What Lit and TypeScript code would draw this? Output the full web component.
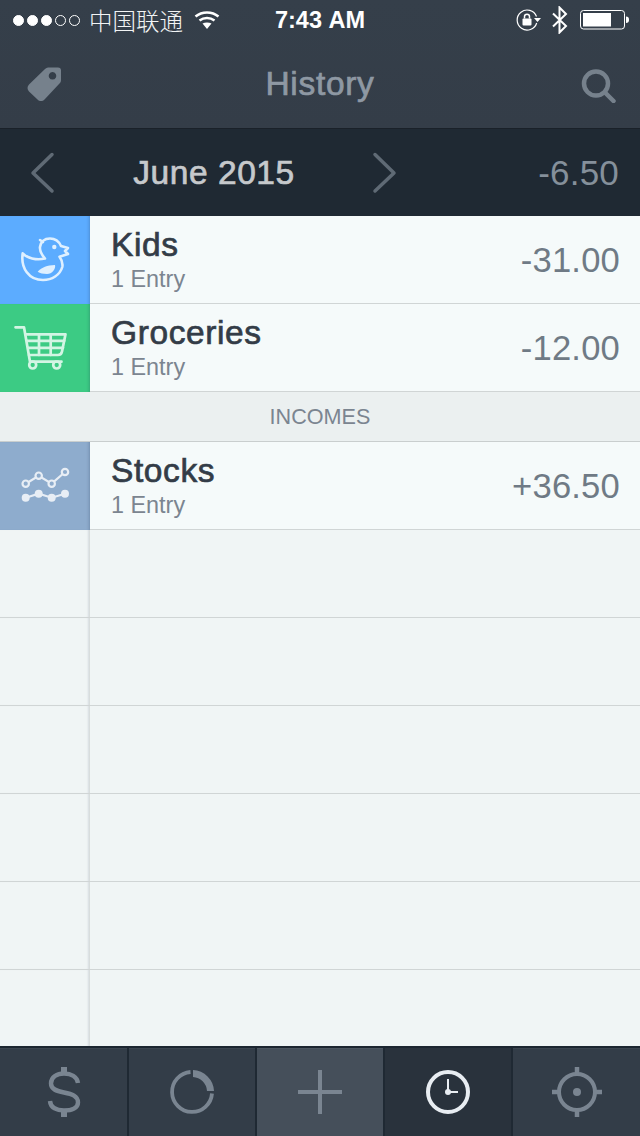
import { LitElement, html, css, svg } from "lit";
import { customElement } from "lit/decorators.js";

const duck = svg`<svg class="tile-icon" viewBox="0 0 90 88" fill="none" stroke="#dff0ff" stroke-width="2.600" stroke-linejoin="round" stroke-linecap="round">
  <path d="M22.7 37.3C27 42 36 44.5 45 42.5C41 38 39.5 35 40 31C41 25.500 45 22.500 50 22.500C55 22.500 59 25.500 61 30L68 32L65 35L68 38L59.500 40.700C62 44 63 47 62.300 51C60 59 52 64 43 64C29 64 20.500 52 22.700 37.300Z"/>
  <path d="M40 24L43 26" />
  <path d="M37.700 55.700C42 51 47 49.500 55 49C56 53 52 58 47 58C43 58 40 57 37.700 55.700Z" fill="#dff0ff" stroke="none"/>
  <circle cx="54.300" cy="31" r="2.200" fill="#dff0ff" stroke="none"/>
</svg>`;

const cart = svg`<svg class="tile-icon" viewBox="0 0 90 88" fill="none" stroke="#d3f5e4" stroke-width="2.700" stroke-linejoin="round" stroke-linecap="round">
  <path d="M15.500 23.300H24L30 57.700H61.500"/>
  <path d="M26 30.300H65.500L62 47.500C61.500 50 60 51 58 51H29"/>
  <path d="M27.200 36.800H64.200M28.400 43.800H63M39 30.300V51M50.700 30.300V51"/>
  <circle cx="32.700" cy="61" r="3.500"/>
  <circle cx="56.700" cy="61" r="3.500"/>
</svg>`;

const stocks = svg`<svg class="tile-icon" viewBox="0 0 90 88" fill="none" stroke="#e8eef5" stroke-width="2.200">
  <path d="M25.700 41.700L38.700 33.700L51.700 41.700L65 30"/>
  <g fill="#8eaccd"><circle cx="25.700" cy="41.700" r="3.200"/><circle cx="38.700" cy="33.700" r="3.200"/><circle cx="51.700" cy="41.700" r="3.200"/><circle cx="65" cy="30" r="3.200"/></g>
  <path d="M25.700 55.700L38.700 51.700L51.700 55.700L65 51.700"/>
  <g fill="#e8eef5" stroke="none"><circle cx="25.700" cy="55.700" r="4"/><circle cx="38.700" cy="51.700" r="4"/><circle cx="51.700" cy="55.700" r="4"/><circle cx="65" cy="51.700" r="4"/></g>
</svg>`;

const tabIcons = [
  svg`<svg class="tab-icon" viewBox="0 0 64 64" fill="none" stroke="#7a8591" stroke-width="4.400">
    <path d="M46 23C45 16.500 39 13.500 32 13.500C25 13.500 19 17 19 23.500C19 29 24 31 32 32.500C40 34 46 36 46 42.500C46 48 40 50.500 32 50.500C25 50.500 18.500 48 18 41"/>
    <path d="M32 7V14M32 50V57" stroke-width="6"/>
  </svg>`,
  svg`<svg class="tab-icon" viewBox="0 0 64 64" fill="none" stroke="#7a8591" stroke-width="3.800">
    <path d="M30.500 12A20 20 0 1 0 52 33.500"/>
    <path d="M33 10A22 22 0 0 1 54 31L47 31A15 15 0 0 0 33 17Z" fill="#7a8591" stroke="none"/>
  </svg>`,
  svg`<svg class="tab-icon" viewBox="0 0 64 64" fill="none" stroke="#7a8591" stroke-width="4">
    <path d="M32 10V54M10 32H54"/>
  </svg>`,
  svg`<svg class="tab-icon" viewBox="0 0 64 64" fill="none" stroke="#e8edf2">
    <circle cx="32" cy="32" r="20" stroke-width="4"/>
    <path d="M32 19V32H42" stroke-width="2"/>
    <circle cx="32" cy="32" r="3" fill="#e8edf2" stroke="none"/>
  </svg>`,
  svg`<svg class="tab-icon" viewBox="0 0 64 64" fill="none" stroke="#7a8591">
    <circle cx="32" cy="32" r="18" stroke-width="4"/>
    <path d="M32 7V15M32 49V57M7 32H15M49 32H57" stroke-width="4.500"/>
    <circle cx="32" cy="32" r="4" fill="#7a8591" stroke="none"/>
  </svg>`,
];

@customElement("app-root")
export class AppRoot extends LitElement {
  static styles = css`
    :host {
      display: flex;
      flex-direction: column;
      width: 640px;
      height: 1136px;
      overflow: hidden;
      font-family: "Liberation Sans", Arial, sans-serif;
      font-kerning: none;
      background: #f0f5f5;
    }
    .top {
      height: 128px;
      flex: none;
      background: linear-gradient(#353f4a, #343d48);
      border-bottom: 1px solid #1a2129;
      display: flex;
      flex-direction: column;
    }
    .status {
      height: 40px;
      display: grid;
      grid-template-columns: 1fr auto 1fr;
      align-items: center;
      color: #fff;
    }
    .status-left {
      display: flex;
      align-items: center;
      padding-left: 13px;
    }
    .dots { display: flex; gap: 3px; }
    .dot {
      width: 11px;
      height: 11px;
      box-sizing: border-box;
      border-radius: 50%;
      border: 1px solid #fff;
    }
    .dot.on { background: #fff; }
    .carrier {
      font-family: "Noto Sans CJK SC", sans-serif;
      font-weight: 300;
      font-size: 23.500px;
      line-height: 40px;
      margin-left: 9px;
      color: #f2f4f5;
    }
    .wifi { width: 26px; height: 20px; margin-left: 11px; margin-top: -1px; }
    .time { font-weight: 700; font-size: 23.500px; line-height: 40px; }
    .status-right {
      display: flex;
      align-items: center;
      justify-content: flex-end;
      padding-right: 10px;
    }
    .lock { width: 26px; height: 24px; }
    .bt { width: 18px; height: 28px; margin-left: 9px; }
    .battery { width: 50px; height: 20px; margin-left: 11px; }
    .nav {
      flex: 1;
      display: flex;
      align-items: center;
      justify-content: space-between;
      padding: 0 24px 2px 24px;
    }
    .nav svg { width: 40px; height: 40px; }
    .title {
      font-size: 33.500px;
      letter-spacing: 0.700px;
      color: #8e98a3;
      -webkit-text-stroke: 0.700px currentColor;
      margin-top: 2px;
    }
    .month {
      height: 87px;
      flex: none;
      background: #1f2933;
      display: flex;
      align-items: center;
      padding: 0 21px 0 24px;
    }
    .chev { width: 34px; height: 44px; flex: none; }
    .month-name {
      width: 312px;
      text-align: center;
      font-size: 33.500px;
      letter-spacing: 0.550px;
      color: #c6c9cc;
      -webkit-text-stroke: 0.700px currentColor;
      margin-top: 1px;
    }
    .month-total {
      margin-left: auto;
      font-size: 35px;
      letter-spacing: 0.200px;
      color: #85909b;
    }
    .list { flex: 1; display: flex; flex-direction: column; min-height: 0; }
    .row {
      height: 88px;
      box-sizing: border-box;
      flex: none;
      display: flex;
      background: #f5fafa;
      border-bottom: 1px solid #d0d5d5;
    }
    .tile {
      width: 90px;
      height: 88px;
      flex: none;
      box-shadow: inset -3px 0 3px -2px rgba(30, 50, 80, 0.25);
    }
    .tile-icon { display: block; width: 90px; height: 88px; }
    .blue { background: #5cacff; }
    .green { background: #3ccb84; }
    .slate { background: #8eaccd; }
    .body {
      flex: 1;
      display: flex;
      flex-direction: column;
      justify-content: center;
      padding-left: 21px;
      padding-top: 1px;
    }
    .name {
      font-size: 33.500px;
      letter-spacing: 0.600px;
      line-height: 36px;
      color: #333c47;
      -webkit-text-stroke: 0.700px currentColor;
    }
    .entries {
      font-size: 23.400px;
      line-height: 28px;
      color: #7b8590;
      margin-top: 2px;
    }
    .amount {
      align-self: center;
      padding-right: 20px;
      padding-top: 2px;
      font-size: 34.600px;
      letter-spacing: 0.200px;
      color: #6f7a85;
    }
    .section {
      height: 50px;
      box-sizing: border-box;
      flex: none;
      display: flex;
      align-items: center;
      justify-content: center;
      background: #ebf0f0;
      border-bottom: 1px solid #c9cece;
      font-size: 21.600px;
      color: #7b8590;
    }
    .empty {
      height: 88px;
      box-sizing: border-box;
      flex: none;
      border-bottom: 1px solid #d0d5d5;
      background: #f0f5f5;
    }
    .empty.last { flex: 1; height: auto; border-bottom: 0; }
    .gutter {
      width: 90px;
      height: 100%;
      box-sizing: border-box;
      border-right: 1px solid #d8dddd;
      box-shadow: inset -2px 0 2px -1px rgba(30, 50, 80, 0.12);
    }
    .tabs {
      height: 90px;
      flex: none;
      box-sizing: border-box;
      border-top: 2px solid #1c2630;
      background: #1f2933;
      display: grid;
      grid-template-columns: 127px 126px 126px 126px 127px;
      column-gap: 2px;
    }
    .tab {
      display: flex;
      align-items: center;
      justify-content: center;
      padding-bottom: 2px;
      background: #333d48;
      border-top: 1px solid #3b4550;
    }
    .tab.add { background: #454f5a; border-top-color: #4d5762; }
    .tab.active { background: #29323c; border-top-color: #29323c; }
    .tab-icon { width: 64px; height: 64px; }
  `;

  private rows = [
    { name: "Kids", amount: "-31.00", cls: "blue", icon: duck },
    { name: "Groceries", amount: "-12.00", cls: "green", icon: cart },
  ];

  private row(r: { name: string; amount: string; cls: string; icon: unknown }) {
    return html`<div class="row">
      <div class="tile ${r.cls}">${r.icon}</div>
      <div class="body">
        <div class="name">${r.name}</div>
        <div class="entries">1 Entry</div>
      </div>
      <div class="amount">${r.amount}</div>
    </div>`;
  }

  render() {
    return html`
      <div class="top">
        <div class="status">
          <div class="status-left">
            <div class="dots">
              ${[1, 1, 1, 0, 0].map((on) => html`<span class="dot ${on ? "on" : ""}"></span>`)}
            </div>
            <span class="carrier">中国联通</span>
            <svg class="wifi" viewBox="0 0 26 20" fill="none" stroke="#fff" stroke-width="2.500">
              <path d="M1.500 6.500C8 1 18 1 24.500 6.500"/>
              <path d="M5.500 10.500C10 7 16 7 20.500 10.500"/>
              <path d="M13 19L8.500 13.500C11 12 15 12 17.500 13.500Z" fill="#fff" stroke="none"/>
            </svg>
          </div>
          <div class="time">7:43 AM</div>
          <div class="status-right">
            <svg class="lock" viewBox="0 0 26 24" fill="none" stroke="#fff" stroke-width="1.200">
              <path d="M20.500 8.500A10 10 0 1 0 20.700 15"/>
              <path d="M18 10H25L21.500 14Z" fill="#fff" stroke="none"/>
              <rect x="6.500" y="10.500" width="9" height="7" rx="1" fill="#fff" stroke="none"/>
              <path d="M8.500 10.500V8.500C8.500 5.500 13.500 5.500 13.500 8.500V10.500" stroke-width="1.500"/>
            </svg>
            <svg class="bt" viewBox="0 0 18 28" fill="none" stroke="#fff" stroke-width="2">
              <path d="M2 7.500L15 20L8.500 26.500V1.500L15 8L2 20.500"/>
            </svg>
            <svg class="battery" viewBox="0 0 50 20" fill="none">
              <rect x="0.500" y="0.500" width="44" height="18.500" rx="3" stroke="#fff"/>
              <rect x="3" y="3" width="28" height="13.500" fill="#fff"/>
              <path d="M46 6.500C48 6.500 49 7.500 49 9.700C49 12 48 13 46 13Z" fill="#fff"/>
            </svg>
          </div>
        </div>
        <div class="nav">
          <svg viewBox="0 0 40 40">
            <path fill-rule="evenodd" fill="#76818c" d="M24 4.500H34C36 4.500 37 5.500 37 7.500V17C37 18.500 36.500 19.500 35.500 20.500L20.500 36.500C18.500 38.500 15.500 38.500 13.500 36.500L5 28.500C3 26.500 3 23.500 5 21.500L21 6C22 5 23 4.500 24 4.500ZM28.500 9A3.800 3.800 0 1 0 28.510 9Z"/>
          </svg>
          <div class="title">History</div>
          <svg viewBox="0 0 40 40" fill="none" stroke="#76818c">
            <circle cx="20" cy="20.500" r="12" stroke-width="4.500"/>
            <path d="M29 29.500L37.500 38" stroke-width="4.500" stroke-linecap="round"/>
          </svg>
        </div>
      </div>
      <div class="month">
        <svg class="chev" viewBox="0 0 34 44" fill="none" stroke="#5f6a75" stroke-width="3.500" stroke-linecap="round" stroke-linejoin="round">
          <path d="M28 3.500L9 22L28 40"/>
        </svg>
        <div class="month-name">June 2015</div>
        <svg class="chev" viewBox="0 0 34 44" fill="none" stroke="#5f6a75" stroke-width="3.500" stroke-linecap="round" stroke-linejoin="round">
          <path d="M5 3.500L24 22L5 40"/>
        </svg>
        <div class="month-total">-6.50</div>
      </div>
      <div class="list">
        ${this.rows.map((r) => this.row(r))}
        <div class="section">INCOMES</div>
        ${this.row({ name: "Stocks", amount: "+36.50", cls: "slate", icon: stocks })}
        ${[0, 1, 2, 3, 4].map(() => html`<div class="empty"><div class="gutter"></div></div>`)}
        <div class="empty last"><div class="gutter"></div></div>
      </div>
      <div class="tabs">
        ${tabIcons.map(
          (icon, i) => html`<div class="tab ${i === 2 ? "add" : i === 3 ? "active" : ""}">${icon}</div>`
        )}
      </div>
    `;
  }
}
